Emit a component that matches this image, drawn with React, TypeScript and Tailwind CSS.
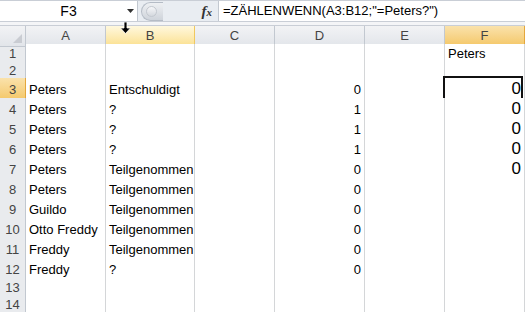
import { FC } from 'react';

type Row = { n: number; cells: string[]; h: string };

const tall = 'h-[20px]';
const short = 'h-[17px]';

const rows: Row[] = [
  { n: 1, cells: ['', '', '', '', '', 'Peters'], h: short },
  { n: 2, cells: ['', '', '', '', '', ''], h: short },
  { n: 3, cells: ['Peters', 'Entschuldigt', '', '0', '', '0'], h: tall },
  { n: 4, cells: ['Peters', '?', '', '1', '', '0'], h: tall },
  { n: 5, cells: ['Peters', '?', '', '1', '', '0'], h: tall },
  { n: 6, cells: ['Peters', '?', '', '1', '', '0'], h: tall },
  { n: 7, cells: ['Peters', 'Teilgenommen', '', '0', '', '0'], h: tall },
  { n: 8, cells: ['Peters', 'Teilgenommen', '', '0', '', ''], h: tall },
  { n: 9, cells: ['Guildo', 'Teilgenommen', '', '0', '', ''], h: tall },
  { n: 10, cells: ['Otto Freddy', 'Teilgenommen', '', '0', '', ''], h: tall },
  { n: 11, cells: ['Freddy', 'Teilgenommen', '', '0', '', ''], h: tall },
  { n: 12, cells: ['Freddy', '?', '', '0', '', ''], h: tall },
  { n: 13, cells: ['', '', '', '', '', ''], h: short },
  { n: 14, cells: ['', '', '', '', '', ''], h: short },
];

const cols = ['A', 'B', 'C', 'D', 'E', 'F'];
const gridCols = 'grid grid-cols-[26px_80px_89px_80px_90px_80px_80px]';

// numbers sit right, text left; F column zeros use the bigger font
const Cell: FC<{ col: number; value: string; row: number; isTall: boolean }> = ({ col, value, row, isTall }) => {
  const isNum = value !== '' && !isNaN(Number(value));
  const selected = col === 5 && row === 3;
  return (
    <div
      className={`relative flex items-center border-r border-b border-[#d4d6d8] bg-white whitespace-nowrap ${
        isNum ? 'justify-end pr-[3px]' : 'justify-start pl-[3px]'
      } ${col === 5 && isNum ? 'text-[17px] leading-[18px]' : 'text-[13px] leading-[16px]'} ${
        isTall && !(col === 5 && isNum) ? 'pt-[2px]' : ''
      }`}
    >
      {value}
      {selected && (
        <>
          <div className="absolute -left-[2px] -top-[2px] right-[1px] -bottom-[1px] border-2 border-[#111] pointer-events-none" />
          <div className="absolute right-0 -bottom-[3px] w-[5px] h-[5px] bg-black border border-white" />
        </>
      )}
    </div>
  );
};

const ColHeader: FC<{ label: string }> = ({ label }) => {
  let cls = 'bg-gradient-to-b from-[#f2f3f5] to-[#e2e5ea] border-[#c2c8d0]';
  if (label === 'B') cls = 'bg-gradient-to-b from-[#fff8dd] to-[#fbe08f] border-[#f0c85e]';
  if (label === 'F') cls = 'bg-gradient-to-b from-[#fae2ab] to-[#f4c766] border-[#e4a73c]';
  return (
    <div className={`flex items-center justify-center border-r border-b text-[13px] text-[#444] ${cls}`}>{label}</div>
  );
};

const App: FC = () => {
  return (
    <div
      className="relative w-[525px] h-[312px] overflow-hidden bg-white select-none"
      style={{ fontFamily: '"Liberation Sans", Arial, sans-serif' }}
    >
      {/* formula bar */}
      <div className="flex h-[22px] bg-[#e9edf2] border-t border-[#c9ced6] border-b border-[#b8bec7]">
        <div className="relative w-[138px] flex items-center justify-center bg-white border-r border-[#c2c8d0] text-[14px] text-black">
          F3
          <svg className="absolute right-[2px] top-[7px]" width="9" height="6" viewBox="0 0 9 6">
            <path d="M1 1h7L4.5 5z" fill="#333" />
          </svg>
        </div>
        <div className="flex items-center w-[80px] pl-[3px]">
          <div className="relative w-[22px] h-[19px] rounded-l-full bg-gradient-to-b from-[#eef0f3] to-[#cfd4db] border border-[#b5bcc6] border-r-0 flex items-center pl-[4px]">
            <div className="w-[11px] h-[11px] rounded-full bg-gradient-to-b from-[#f6f7f9] to-[#d4d8de] border border-[#c3c8cf]" />
          </div>
          <div className="flex-1" />
          <span
            className="pr-[6px] text-[15px] italic font-bold text-[#333]"
            style={{ fontFamily: '"Liberation Serif", serif' }}
          >
            f<span className="text-[11px]">x</span>
          </span>
        </div>
        <div className="flex-1 flex items-center bg-white border-l border-[#c2c8d0] pl-[4px] text-[13px] text-black whitespace-nowrap">
          =ZÄHLENWENN(A3:B12;"=Peters?")
        </div>
      </div>
      <div className="h-[4px] bg-[#f4f5f7] border-b border-[#c9ced6]" />

      {/* sheet */}
      <div className={`${gridCols} h-[18px]`}>
        <div className="relative bg-gradient-to-b from-[#f2f3f5] to-[#e2e5ea] border-r border-b border-[#c2c8d0]">
          <svg className="absolute right-[3px] bottom-[3px]" width="9" height="9" viewBox="0 0 9 9">
            <path d="M9 0V9H0z" fill="#c9ccd2" />
          </svg>
        </div>
        {cols.map((c) => (
          <ColHeader key={c} label={c} />
        ))}
      </div>
      {rows.map((r) => (
        <div key={r.n} className={`${gridCols} ${r.h}`}>
          <div
            className={`flex items-center justify-center border-r border-b text-[13px] text-[#444] ${
              r.h === tall ? 'pt-[2px]' : ''
            } ${
              r.n === 3
                ? 'bg-gradient-to-b from-[#fae2ab] to-[#f4c766] border-[#e4a73c]'
                : 'bg-[#e9ebee] border-[#c2c8d0]'
            }`}
          >
            {r.n}
          </div>
          {r.cells.map((v, i) => (
            <Cell key={i} col={i} value={v} row={r.n} isTall={r.h === tall} />
          ))}
        </div>
      ))}

      {/* mouse pointer over the column header */}
      <svg className="absolute left-[120px] top-[22px]" width="11" height="12" viewBox="0 0 11 12">
        <path d="M4 0h3v6h3.5L5.5 11.5 0.5 6H4z" fill="#000" stroke="#fff" strokeWidth="0.8" />
      </svg>
    </div>
  );
};

export default App;
